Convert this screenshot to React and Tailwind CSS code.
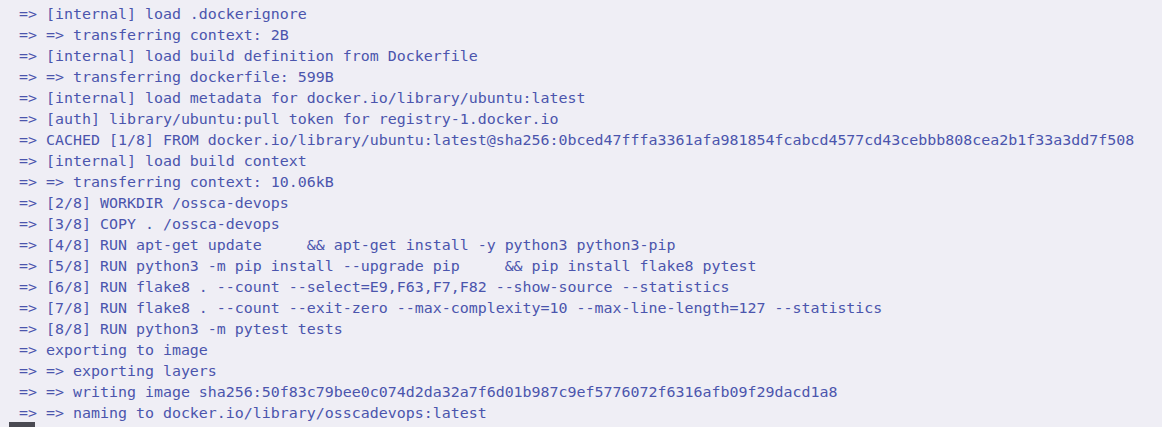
export default function App() {
  const lines = [
    "=> [internal] load .dockerignore",
    "=> => transferring context: 2B",
    "=> [internal] load build definition from Dockerfile",
    "=> => transferring dockerfile: 599B",
    "=> [internal] load metadata for docker.io/library/ubuntu:latest",
    "=> [auth] library/ubuntu:pull token for registry-1.docker.io",
    "=> CACHED [1/8] FROM docker.io/library/ubuntu:latest@sha256:0bced47fffa3361afa981854fcabcd4577cd43cebbb808cea2b1f33a3dd7f508",
    "=> [internal] load build context",
    "=> => transferring context: 10.06kB",
    "=> [2/8] WORKDIR /ossca-devops",
    "=> [3/8] COPY . /ossca-devops",
    "=> [4/8] RUN apt-get update     && apt-get install -y python3 python3-pip",
    "=> [5/8] RUN python3 -m pip install --upgrade pip     && pip install flake8 pytest",
    "=> [6/8] RUN flake8 . --count --select=E9,F63,F7,F82 --show-source --statistics",
    "=> [7/8] RUN flake8 . --count --exit-zero --max-complexity=10 --max-line-length=127 --statistics",
    "=> [8/8] RUN python3 -m pytest tests",
    "=> exporting to image",
    "=> => exporting layers",
    "=> => writing image sha256:50f83c79bee0c074d2da32a7f6d01b987c9ef5776072f6316afb09f29dacd1a8",
    "=> => naming to docker.io/library/osscadevops:latest",
  ];
  return (
    <div className="w-[1162px] h-[427px] overflow-hidden bg-[#efeef5] pt-[4px]">
      <div className="pl-[19px] text-[#4b55ad] text-[14.95px] leading-[21px] whitespace-pre" style={{ fontFamily: '"DejaVu Sans Mono", "Liberation Mono", monospace' }}>
        {lines.map((l, i) => (
          <div key={i}>{l}</div>
        ))}
      </div>
      <div className="flex items-start h-[21px] pl-[9px] mt-[-2px] text-[#5a5f80] text-[14.95px] leading-[21px] whitespace-pre" style={{ fontFamily: '"DejaVu Sans Mono", "Liberation Mono", monospace' }}>
        <div className="w-[26px] h-[21px] bg-[#4a4a52] mr-[10px]" />
        <div className="mt-[4px]">Use 'docker scan' to run Snyk tests against images to find vulnerabilities</div>
      </div>
    </div>
  );
}
